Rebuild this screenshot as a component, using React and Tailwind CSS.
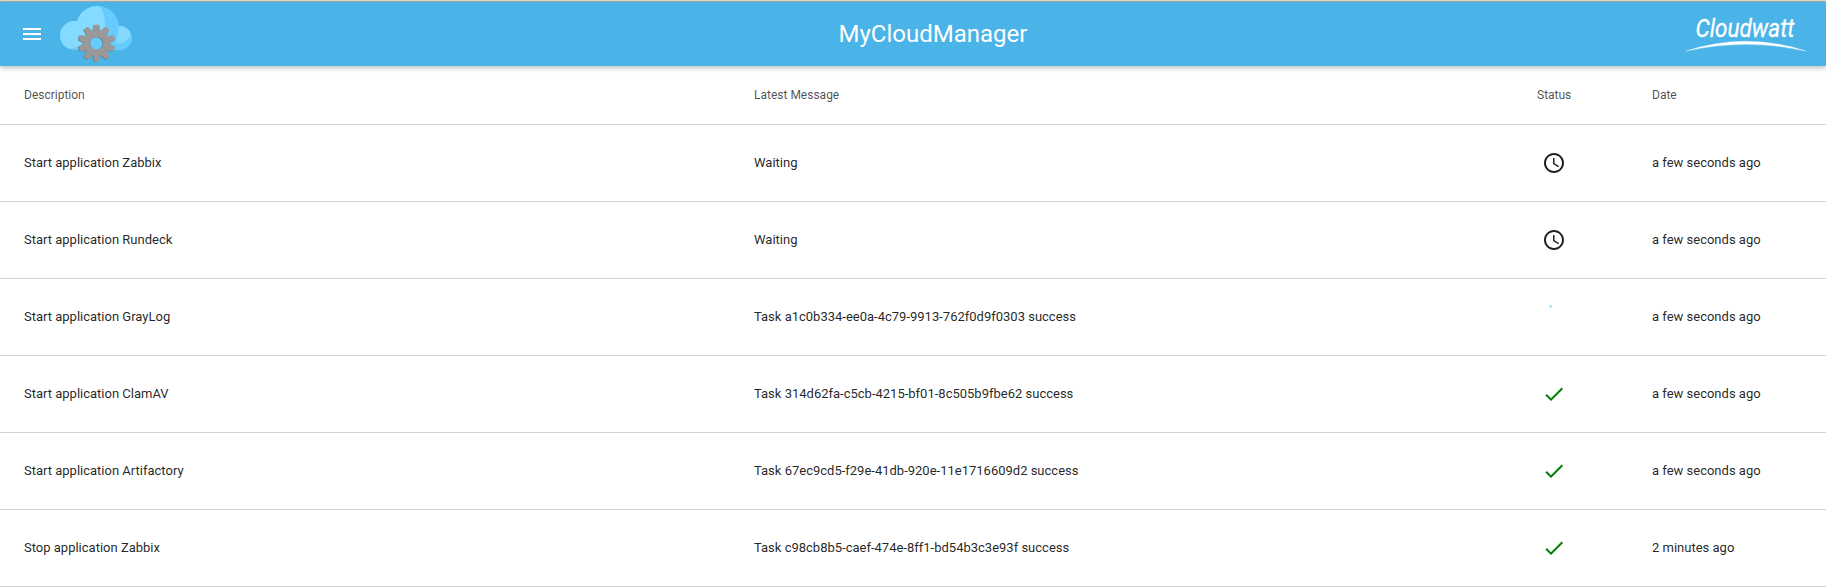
import React from "react";
import { MdMenu, MdSchedule, MdCheck } from "react-icons/md";

const tasks = [
  { description: "Start application Zabbix", message: "Waiting", status: "waiting", date: "a few seconds ago" },
  { description: "Start application Rundeck", message: "Waiting", status: "waiting", date: "a few seconds ago" },
  { description: "Start application GrayLog", message: "Task a1c0b334-ee0a-4c79-9913-762f0d9f0303 success", status: "running", date: "a few seconds ago" },
  { description: "Start application ClamAV", message: "Task 314d62fa-c5cb-4215-bf01-8c505b9fbe62 success", status: "done", date: "a few seconds ago" },
  { description: "Start application Artifactory", message: "Task 67ec9cd5-f29e-41db-920e-11e1716609d2 success", status: "done", date: "a few seconds ago" },
  { description: "Stop application Zabbix", message: "Task c98cb8b5-caef-474e-8ff1-bd54b3c3e93f success", status: "done", date: "2 minutes ago" },
];

const COLUMNS = "grid grid-cols-[730px_783px_115px_1fr] items-center pl-6";

const TEETH = [0, 36, 72, 108, 144, 180, 216, 252, 288, 324];

function Gear({ fill }) {
  return (
    <g fill={fill}>
      <circle r="9.6" fill="none" stroke={fill} strokeWidth="6.6" />
      {TEETH.map((angle) => (
        <path key={angle} transform={`rotate(${angle})`} d="M-3.8 -11.5L-2.5 -18L-2 -18.5H2L2.5 -18L3.8 -11.5Z" />
      ))}
    </g>
  );
}

function CloudLogo() {
  return (
    <svg className="ml-4 h-16 w-[76px]" viewBox="60 2 76 64">
      <defs>
        <clipPath id="cloud">
          <circle cx="97.5" cy="27.5" r="21.5" />
          <circle cx="74.5" cy="35.5" r="14.5" />
          <circle cx="120" cy="38" r="12" />
          <rect x="74" y="32" width="46" height="18" />
        </clipPath>
      </defs>
      <g clipPath="url(#cloud)">
        <rect x="58" y="4" width="78" height="48" fill="#66ccff" />
        <path d="M119 25C126 26 131 31 130.500 35C128 41 122 44 116 44L117 38Z" fill="#85daff" />
        <path d="M72 4H98C103 10 105.500 18 105 26C104 36 97 44 86 48L76 40Z" fill="#85daff" />
        <path d="M58 20H82L88 40C84 45 77 48 68 49H58Z" fill="#85daff" />
      </g>
      <circle cx="96.800" cy="43.200" r="8" fill="#66ccff" />
      <g transform="translate(96.100 43.600)"><Gear fill="#6b7780" /></g>
      <g transform="translate(96.800 43.200)"><Gear fill="#999999" /></g>
    </svg>
  );
}

function CloudwattLogo() {
  return (
    <svg className="h-16 w-[130px]" viewBox="1682 2 130 64">
      <text
        x="1695.500"
        y="36.600"
        textLength="99"
        lengthAdjust="spacingAndGlyphs"
        fill="#ffffff"
        stroke="#ffffff"
        strokeWidth="0.300"
        className="font-[Roboto,sans-serif] text-[25px] italic"
      >
        Cloudwatt
      </text>
      <path d="M1686 51Q1746 31.500 1806 51Q1746 37.500 1686 51Z" fill="#ffffff" stroke="#ffffff" strokeWidth="0.300" />
    </svg>
  );
}

function Status({ status }) {
  if (status === "waiting") return <MdSchedule size={24} />;
  if (status === "done") return <MdCheck size={24} className="text-[#008000]" />;
  return (
    <svg className="size-6" viewBox="0 0 24 24">
      <circle cx="8.600" cy="1.400" r="1.300" fill="#a3dafa" />
    </svg>
  );
}

export default function App() {
  return (
    <div className="h-[587px] overflow-hidden bg-white font-[Roboto,sans-serif] text-[13px] text-black/87">
      <div className="h-0.5 border-b border-[#a9a9a6] bg-[#dcdad5]" />
      <header className="grid h-16 grid-cols-[1fr_auto_1fr] items-center bg-[#4ab3e7] text-white shadow-[0_2px_5px_rgba(0,0,0,0.26)]">
        <div className="flex items-center pl-5">
          <MdMenu size={24} />
          <CloudLogo />
        </div>
        <h1 className="pl-10 text-2xl">MyCloudManager</h1>
        <div className="flex justify-end pr-3.5">
          <CloudwattLogo />
        </div>
      </header>
      <main>
        <div className={`${COLUMNS} h-[59px] border-b border-[#d2d2d2] text-xs text-black/70`}>
          <span>Description</span>
          <span>Latest Message</span>
          <span>Status</span>
          <span>Date</span>
        </div>
        {tasks.map((task) => (
          <div key={task.description} className={`${COLUMNS} h-[77px] border-b border-[#d2d2d2]`}>
            <span>{task.description}</span>
            <span>{task.message}</span>
            <span className="pl-[5px]">
              <Status status={task.status} />
            </span>
            <span>{task.date}</span>
          </div>
        ))}
      </main>
    </div>
  );
}
